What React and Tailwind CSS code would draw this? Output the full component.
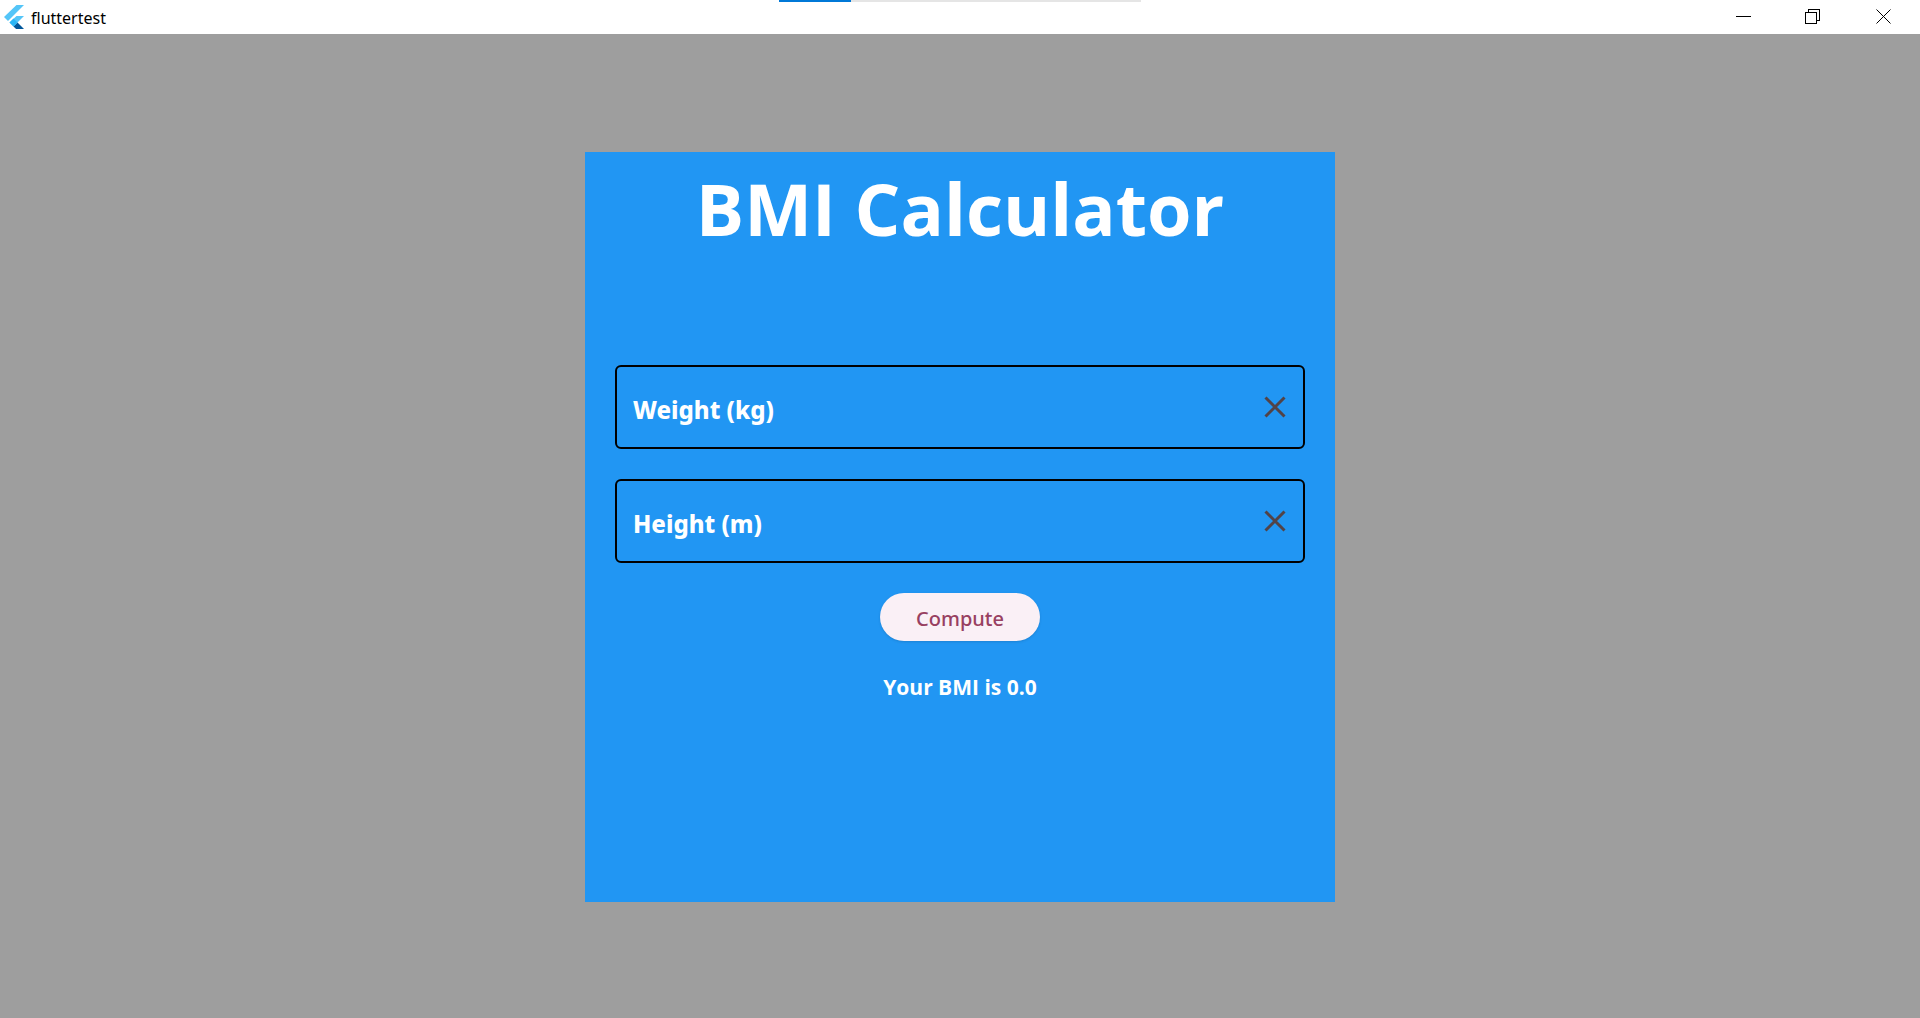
import { useState } from "react";

function FlutterLogo() {
  return (
    <svg className="h-6 w-5" viewBox="0 0 20 24" aria-hidden="true">
      <path d="M12.5 0 0 12l4 4L20 0z" fill="#54c5f8" />
      <path d="M12.5 11 5.5 17.5l4 3.9L20 11z" fill="#54c5f8" />
      <path d="m9.5 21.4 2.6 2.6H20l-6.5-6.5z" fill="#01579b" />
      <path d="m5.5 17.5 4-4 4 4-4 3.9z" fill="#29b6f6" />
    </svg>
  );
}

function TitleBar() {
  return (
    <header className="relative flex h-[34px] items-center bg-white pl-1">
      <FlutterLogo />
      <span className="ml-[7px] pt-0.5 text-base text-black">fluttertest</span>
      <div className="absolute left-[779px] top-0 h-0.5 w-[362px] bg-[#e5e5e5]">
        <div className="h-full w-[72px] bg-[#0078d7]" />
      </div>
      <div className="ml-auto flex h-full">
        <button type="button" aria-label="Minimize" className="flex w-[68px] items-center justify-center">
          <svg className="h-4 w-4" viewBox="0 0 16 16" fill="none" stroke="#000" shapeRendering="crispEdges">
            <path d="M0 7.5h15" />
          </svg>
        </button>
        <button type="button" aria-label="Restore" className="flex w-[70px] items-center justify-center">
          <svg className="h-4 w-4" viewBox="0 0 16 16" fill="none" stroke="#000" shapeRendering="crispEdges">
            <path d="M.5 3.5h11v11H.5zM3.5 3.5v-3h11v11h-3" />
          </svg>
        </button>
        <button type="button" aria-label="Close" className="flex w-[72px] items-center justify-center">
          <svg className="h-4 w-4" viewBox="0 0 16 16" fill="none" stroke="#000">
            <path d="M.5.5l14 14M14.5.5l-14 14" />
          </svg>
        </button>
      </div>
    </header>
  );
}

function Field({ label, value, onChange }) {
  return (
    <div className="flex h-[84px] w-full items-center rounded-md border-2 border-black px-4">
      <input
        type="text"
        aria-label={label}
        placeholder={label}
        value={value}
        onChange={(e) => onChange(e.target.value)}
        className="h-full min-w-0 flex-1 bg-transparent pt-1 text-2xl font-extrabold text-white outline-none placeholder:text-white"
      />
      <button type="button" aria-label={"Clear " + label} onClick={() => onChange("")}>
        <svg className="h-6 w-6" viewBox="0 0 24 24" fill="none" stroke="#524347" strokeWidth="3">
          <path d="m2.5 2.5 19 19M21.5 2.5l-19 19" />
        </svg>
      </button>
    </div>
  );
}

export default function App() {
  const [weight, setWeight] = useState("");
  const [height, setHeight] = useState("");
  const [bmi, setBmi] = useState("0.0");

  const compute = () => {
    const result = Number(weight) / Number(height) ** 2;
    setBmi(Number.isFinite(result) ? result.toFixed(1) : "0.0");
  };

  return (
    <div className="flex min-h-screen flex-col bg-[#9e9e9e] font-['Noto_Sans','Open_Sans',sans-serif]">
      <TitleBar />
      <main className="flex flex-1 items-center justify-center pt-0.5">
        <section className="flex min-h-[750px] w-full max-w-[750px] flex-col items-center bg-[#2196f3] px-[30px]">
          <h1 className="pt-1.5 pb-[107px] font-['Open_Sans',sans-serif] text-7xl leading-[100px] font-bold text-white">
            BMI Calculator
          </h1>
          <div className="flex w-full flex-col items-center gap-[30px]">
            <Field label="Weight (kg)" value={weight} onChange={setWeight} />
            <Field label="Height (m)" value={height} onChange={setHeight} />
            <button
              type="button"
              onClick={compute}
              className="h-12 rounded-full bg-[#faf0f6] px-9 pt-1 text-xl font-medium text-[#984061] shadow"
            >
              Compute
            </button>
            <p className="font-['Open_Sans',sans-serif] text-[21px] leading-8 font-bold text-white">Your BMI is {bmi}</p>
          </div>
        </section>
      </main>
    </div>
  );
}
